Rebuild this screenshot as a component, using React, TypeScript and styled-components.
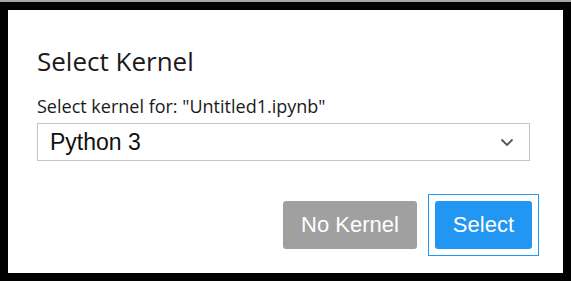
import React from "react";
import styled, { createGlobalStyle } from "styled-components";

const Global = createGlobalStyle`
  html, body { margin: 0; padding: 0; background: #ffffff; }
  body { width: 571px; height: 283px; overflow: hidden; }
`;

const TopStrip = styled.div`
  height: 2px;
  background: #a6a6a6;
`;

const Frame = styled.div`
  background: #000000;
  padding: 8px;
  width: 571px;
  box-sizing: border-box;
`;

const Dialog = styled.div`
  background: #ffffff;
  height: 263px;
  box-sizing: border-box;
  padding: 34px 24px 0 29px;
  display: flex;
  flex-direction: column;
`;

const Title = styled.h1`
  margin: 0;
  font-family: "Open Sans", sans-serif;
  font-weight: 400;
  font-size: 26px;
  line-height: 34px;
  color: #1a1a1a;
`;

const Label = styled.label`
  margin-top: 16px;
  font-family: "Open Sans", sans-serif;
  font-size: 18px;
  line-height: 24px;
  color: #1a1a1a;
`;

const SelectBox = styled.div`
  margin: 5px 9px 0 0;
  height: 38px;
  border: 1px solid #c4c4c4;
  box-sizing: border-box;
  display: flex;
  align-items: center;
  justify-content: space-between;
  padding: 0 15px 0 12px;
  font-family: "Liberation Sans", Arial, sans-serif;
  font-size: 23px;
  color: #111111;
`;

const Actions = styled.div`
  margin-top: 33px;
  display: flex;
  justify-content: flex-end;
  align-items: center;
  gap: 11px;
`;

const FocusRing = styled.span`
  display: inline-flex;
  padding: 6px;
  border: 1px solid #2196f3;
`;

const Button = styled.button<{ $primary?: boolean }>`
  height: 48px;
  padding: 0 18px;
  border: none;
  border-radius: 3px;
  background: ${(p) => (p.$primary ? "#2196f3" : "#a0a0a0")};
  color: #ffffff;
  font-family: "Liberation Sans", Arial, sans-serif;
  font-size: 22px;
  cursor: pointer;
  outline: none;
`;

export default function App() {
  return (
    <>
      <Global />
      <TopStrip />
      <Frame>
        <Dialog>
          <Title>Select Kernel</Title>
          <Label>Select kernel for: "Untitled1.ipynb"</Label>
          <SelectBox>
            <span>Python 3</span>
            <svg width="14" height="9" viewBox="0 0 14 9">
              <path d="M1.5 1.5 L7 7 L12.5 1.5" fill="none" stroke="#555" strokeWidth="1.8" />
            </svg>
          </SelectBox>
          <Actions>
            <Button>No Kernel</Button>
            <FocusRing>
              <Button $primary>Select</Button>
            </FocusRing>
          </Actions>
        </Dialog>
      </Frame>
    </>
  );
}
